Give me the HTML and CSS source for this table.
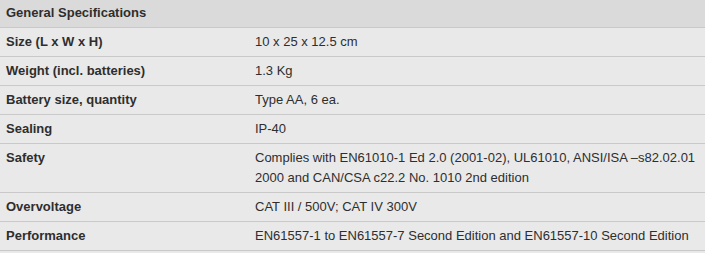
FILE: index.html
```html
<!DOCTYPE html>
<html>
<head>
<meta charset="utf-8">
<link rel="stylesheet" href="styles.css">
</head>
<body>
<table class="specs">
  <thead>
    <tr class="head"><th colspan="2">General Specifications</th></tr>
  </thead>
  <tbody>
    <tr><td class="label">Size (L x W x H)</td><td class="value">10 x 25 x 12.5 cm</td></tr>
    <tr><td class="label">Weight (incl. batteries)</td><td class="value">1.3 Kg</td></tr>
    <tr><td class="label">Battery size, quantity</td><td class="value">Type AA, 6 ea.</td></tr>
    <tr><td class="label">Sealing</td><td class="value">IP-40</td></tr>
    <tr><td class="label">Safety</td><td class="value">Complies with EN61010-1 Ed 2.0 (2001-02), UL61010, ANSI/ISA –s82.02.01 2000 and CAN/CSA c22.2 No. 1010 2nd edition</td></tr>
    <tr><td class="label">Overvoltage</td><td class="value">CAT III / 500V; CAT IV 300V</td></tr>
    <tr><td class="label">Performance</td><td class="value">EN61557-1 to EN61557-7 Second Edition and EN61557-10 Second Edition</td></tr>
  </tbody>
</table>
</body>
</html>
```

FILE: styles.css
```css
html, body {
  margin: 0;
  padding: 0;
  background: #e9e9e9;
}
.specs {
  width: 705px;
  border-collapse: collapse;
  font-family: "Liberation Sans", Arial, sans-serif;
  font-size: 13px;
  line-height: 20px;
  color: #2e2e2e;
}
.specs th {
  background: #dadada;
  text-align: left;
  font-weight: bold;
  padding: 3px 6px 4px;
  border-bottom: 1px solid #c9c9c9;
}
.specs td {
  background: #e9e9e9;
  padding: 4px 6px;
  vertical-align: top;
  border-bottom: 1px solid #c9c9c9;
}
.specs td.label {
  width: 237px;
  font-weight: bold;
}
.specs td.value {
  padding-left: 6px;
}
```
